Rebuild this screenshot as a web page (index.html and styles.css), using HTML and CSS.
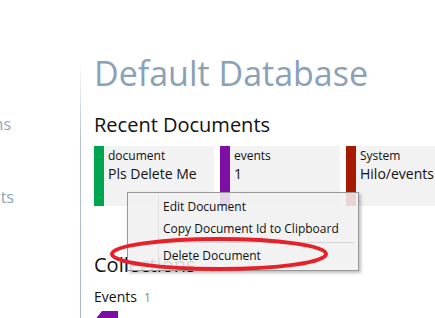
FILE: index.html
```html
<!DOCTYPE html>
<html lang="en">
<head>
    <meta charset="UTF-8">
    <meta name="viewport" content="width=device-width, initial-scale=1.0">
    <link rel="stylesheet" href="styles.css">
</head>
<body>
    <div class="layout">
        <nav class="sidebar">
            <div class="nav-item first"><span>Operations</span></div>
            <div class="nav-item second"><span>Documents</span></div>
        </nav>

        <main class="content">
            <h1 class="db-title">Default Database</h1>

            <h2 class="section-title">Recent Documents</h2>
            <div class="recent">
                <div class="doc-card green">
                    <div class="doc-type">document</div>
                    <div class="doc-id">Pls Delete Me</div>
                </div>
                <div class="doc-card purple">
                    <div class="doc-type">events</div>
                    <div class="doc-id">1</div>
                </div>
                <div class="doc-card red">
                    <div class="doc-type">System</div>
                    <div class="doc-id">Hilo/events</div>
                </div>
            </div>

            <h2 class="section-title collections">Collections</h2>
            <div class="collection">
                <span class="collection-name">Events</span>
                <span class="collection-count">1</span>
            </div>
            <div class="collection-tile"></div>
        </main>
    </div>

    <div class="context-menu">
        <div class="menu-item">Edit Document</div>
        <div class="menu-item">Copy Document Id to Clipboard</div>
        <div class="menu-sep"></div>
        <div class="menu-item">Delete Document</div>
    </div>

    <svg class="highlight" width="230" height="40" viewBox="0 0 230 40">
        <ellipse cx="114" cy="18" rx="107" ry="15" fill="none" stroke="#e8202a" stroke-width="4"/>
    </svg>
</body>
</html>
```

FILE: styles.css
```css
body {
    font-family: 'Open Sans', sans-serif;
    margin: 0;
    padding: 0;
    background-color: #FFFFFF;
    color: #111;
    overflow: hidden;
    height: 318px;
    position: relative;
}
.layout {
    display: flex;
    height: 318px;
}
.sidebar {
    width: 80px;
    flex-shrink: 0;
    margin-top: 60px;
    border-right: 1px solid transparent;
    border-image: linear-gradient(to bottom, #ffffff, #b6c4d2 30%, #a9b9c9) 1;
}
.nav-item {
    display: flex;
    justify-content: flex-end;
    width: 11px;
    white-space: nowrap;
    font-size: 16px;
    color: #8fa3b9;
    margin-top: 51px;
}
.nav-item.first {
    margin-top: 53px;
}
.nav-item.second {
    width: 14px;
}
.content {
    padding-left: 13px;
    flex-grow: 1;
    min-width: 0;
}
.db-title {
    margin: 50px 0 0 0;
    font-size: 34px;
    font-weight: 400;
    color: #8aa1b7;
    line-height: 46px;
}
.section-title {
    margin: 16px 0 0 0;
    font-size: 20px;
    font-weight: 400;
    line-height: 26px;
}
.recent {
    display: flex;
    gap: 6px;
    margin-top: 8px;
}
.doc-card {
    width: 106px;
    height: 60px;
    flex-shrink: 0;
    background-color: #f2f2f2;
    border-left: 10px solid;
    padding-left: 4px;
    box-sizing: content-box;
}
.doc-card.green { border-color: #00a54f; }
.doc-card.purple { border-color: #7e0ea6; }
.doc-card.red { border-color: #a61a00; }
.doc-type {
    font-size: 12px;
    line-height: 16px;
    margin-top: 2px;
}
.doc-id {
    font-size: 14px;
    line-height: 20px;
}
.collections {
    margin-top: 46px;
}
.collection {
    margin-top: 8px;
    line-height: 20px;
}
.collection-name {
    font-size: 14px;
}
.collection-count {
    font-size: 12px;
    color: #888;
    margin-left: 3px;
}
.collection-tile {
    width: 24px;
    height: 10px;
    margin-top: 3px;
    background-color: #7e0ca6;
    clip-path: polygon(8px 0, 100% 0, 100% 100%, 0 100%);
}
.context-menu {
    position: absolute;
    left: 127px;
    top: 192px;
    width: 230px;
    padding: 3px 0;
    background-color: rgba(240, 240, 240, 0.88);
    border: 1px solid #979797;
    box-shadow: 2px 2px 3px rgba(0, 0, 0, 0.25);
    font-size: 12px;
    color: #111;
}
.menu-item {
    padding: 3px 0 3px 34px;
    line-height: 16px;
    border-left: 1px solid transparent;
}
.context-menu::before {
    content: "";
    position: absolute;
    left: 30px;
    top: 2px;
    bottom: 2px;
    border-left: 1px solid #e2e2e2;
}
.menu-sep {
    margin: 2px 4px 2px 31px;
    border-top: 1px solid #d5d5d5;
}
.highlight {
    position: absolute;
    left: 105px;
    top: 236px;
}
```
